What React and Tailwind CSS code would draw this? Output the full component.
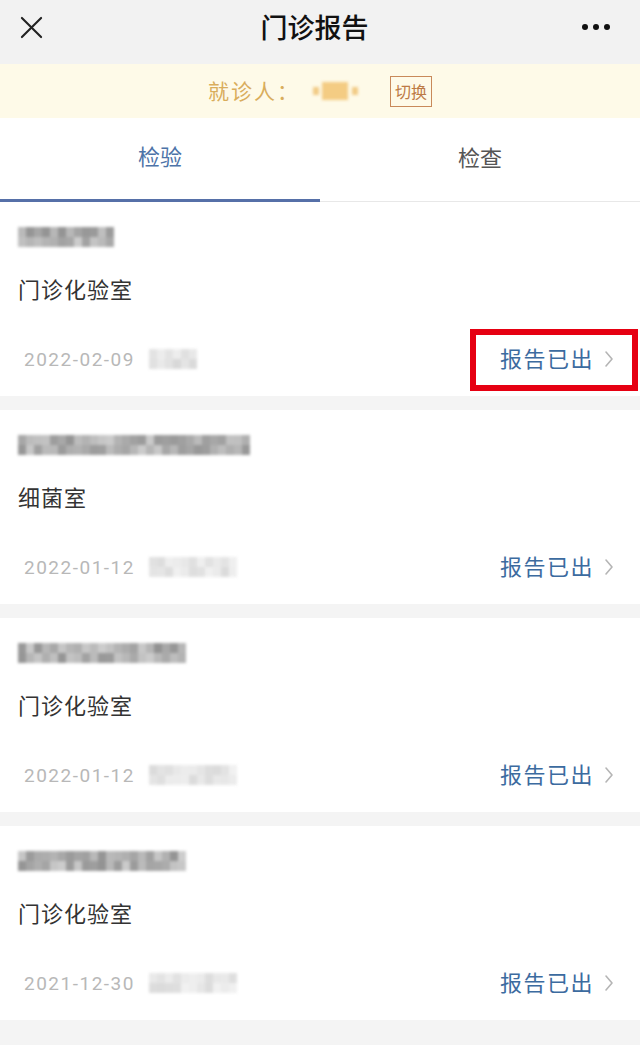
import React from "react";

const FONT = { fontFamily: '"Noto Sans CJK SC", "Noto Sans", sans-serif' };

// mosaic blocks standing in for the blurred text in the screenshot
const Mosaic = ({ cells, className = "" }) => (
  <div className={`flex h-[20px] blur-[1.5px] ${className}`}>
    {cells.map((c, i) => (
      <div key={i} className="flex flex-col" style={{ width: c.w }}>
        <div className="h-[10px]" style={{ background: c.a }} />
        <div className="h-[10px]" style={{ background: c.b }} />
      </div>
    ))}
  </div>
);

const shade = (seed, n, base = 205, spread = 60) => {
  const out = [];
  let s = seed;
  for (let i = 0; i < n; i++) {
    s = (s * 9301 + 49297) % 233280;
    const r1 = base - Math.floor((s / 233280) * spread);
    s = (s * 9301 + 49297) % 233280;
    const r2 = base - Math.floor((s / 233280) * spread);
    out.push({
      w: 8,
      a: `rgb(${r1},${r1},${r1})`,
      b: `rgb(${r2},${r2},${r2})`,
    });
  }
  return out;
};

const Chevron = () => (
  <svg width="10" height="18" viewBox="0 0 10 18" fill="none">
    <path d="M2 2l6 7-6 7" stroke="#b5b5b5" strokeWidth="1.6" strokeLinecap="round" strokeLinejoin="round" />
  </svg>
);

const reports = [
  { title: shade(3, 12), name: "门诊化验室", date: "2022-02-09", time: shade(7, 6, 238, 30), marked: true },
  { title: shade(11, 29), name: "细菌室", date: "2022-01-12", time: shade(13, 11, 240, 25) },
  { title: shade(17, 21), name: "门诊化验室", date: "2022-01-12", time: shade(19, 11, 240, 25) },
  { title: shade(23, 21), name: "门诊化验室", date: "2021-12-30", time: shade(29, 11, 240, 25) },
];

export default function App() {
  return (
    <div className="w-[640px] min-h-[1045px] bg-[#f4f4f4]" style={FONT}>
      {/* top bar */}
      <div className="h-[64px] bg-[#f2f2f2] flex items-center justify-between px-[20px]">
        <svg width="23" height="23" viewBox="0 0 24 24" fill="none" className="-mt-[10px]">
          <path d="M2 2l20 20M22 2L2 22" stroke="#222" strokeWidth="2.2" strokeLinecap="round" />
        </svg>
        <div className="text-[27px] text-[#111] font-medium -mt-[10px] ml-[4px]">门诊报告</div>
        <div className="flex gap-[5px] -mt-[10px] mr-[10px]">
          <span className="w-[6px] h-[6px] rounded-full bg-[#111]" />
          <span className="w-[6px] h-[6px] rounded-full bg-[#111]" />
          <span className="w-[6px] h-[6px] rounded-full bg-[#111]" />
        </div>
      </div>

      {/* patient banner */}
      <div className="h-[54px] bg-[#fefae8] flex items-center justify-center">
        <span className="text-[21px] text-[#d9ad5c] tracking-[2px]">就诊人：</span>
        <div className="ml-[13px] w-[45px] flex items-center justify-between blur-[1.5px]">
          <span className="w-[6px] h-[8px] bg-[#f2cb86]" />
          <span className="w-[26px] h-[18px] bg-[#f4cc83]" />
          <span className="w-[6px] h-[8px] bg-[#f2cb86]" />
        </div>
        <span className="ml-[32px] h-[31px] px-[4px] border-[1.5px] border-[#c8895a] text-[16px] leading-[28px] text-[#bd7a45]">
          切换
        </span>
      </div>

      {/* tabs */}
      <div className="bg-white flex h-[84px] border-b border-[#e8e8e8]">
        <div className="w-1/2 flex items-center justify-center pb-[6px] border-b-[3px] border-[#5670a8] text-[22px] text-[#4d73a8] -mb-[1px]">
          检验
        </div>
        <div className="w-1/2 flex items-center justify-center pb-[6px] text-[22px] text-[#555]">检查</div>
      </div>

      {/* report list */}
      <div className="flex flex-col gap-[14px]">
        {reports.map((r, idx) => (
          <div key={idx} className="bg-white h-[194px] px-[18px] pt-[25px] flex flex-col">
            <Mosaic cells={r.title} />
            <div className="mt-[26px] h-[30px] leading-[30px] text-[22px] text-[#333] tracking-[1px]">
              {r.name}
            </div>
            <div className="mt-[36px] h-[40px] flex items-center justify-between relative">
              <div className="flex items-center gap-[14px] pl-[6px]">
                <span
                  className="text-[19px] leading-none text-[#b8b8b8] tracking-[1.5px]"
                  style={{ fontFamily: '"Roboto", "Noto Sans", sans-serif' }}
                >
                  {r.date}
                </span>
                <Mosaic cells={r.time} className="opacity-90" />
              </div>
              <div className="flex items-center gap-[10px] pr-[8px]">
                <span className="text-[22px] leading-none text-[#3c6b9f] tracking-[1.5px] -mt-[4px]">报告已出</span>
                <Chevron />
              </div>
              {r.marked && (
                <div className="absolute right-[-16px] top-[-10px] w-[168px] h-[62px] border-[6px] border-[#e60012]" />
              )}
            </div>
          </div>
        ))}
      </div>
    </div>
  );
}
